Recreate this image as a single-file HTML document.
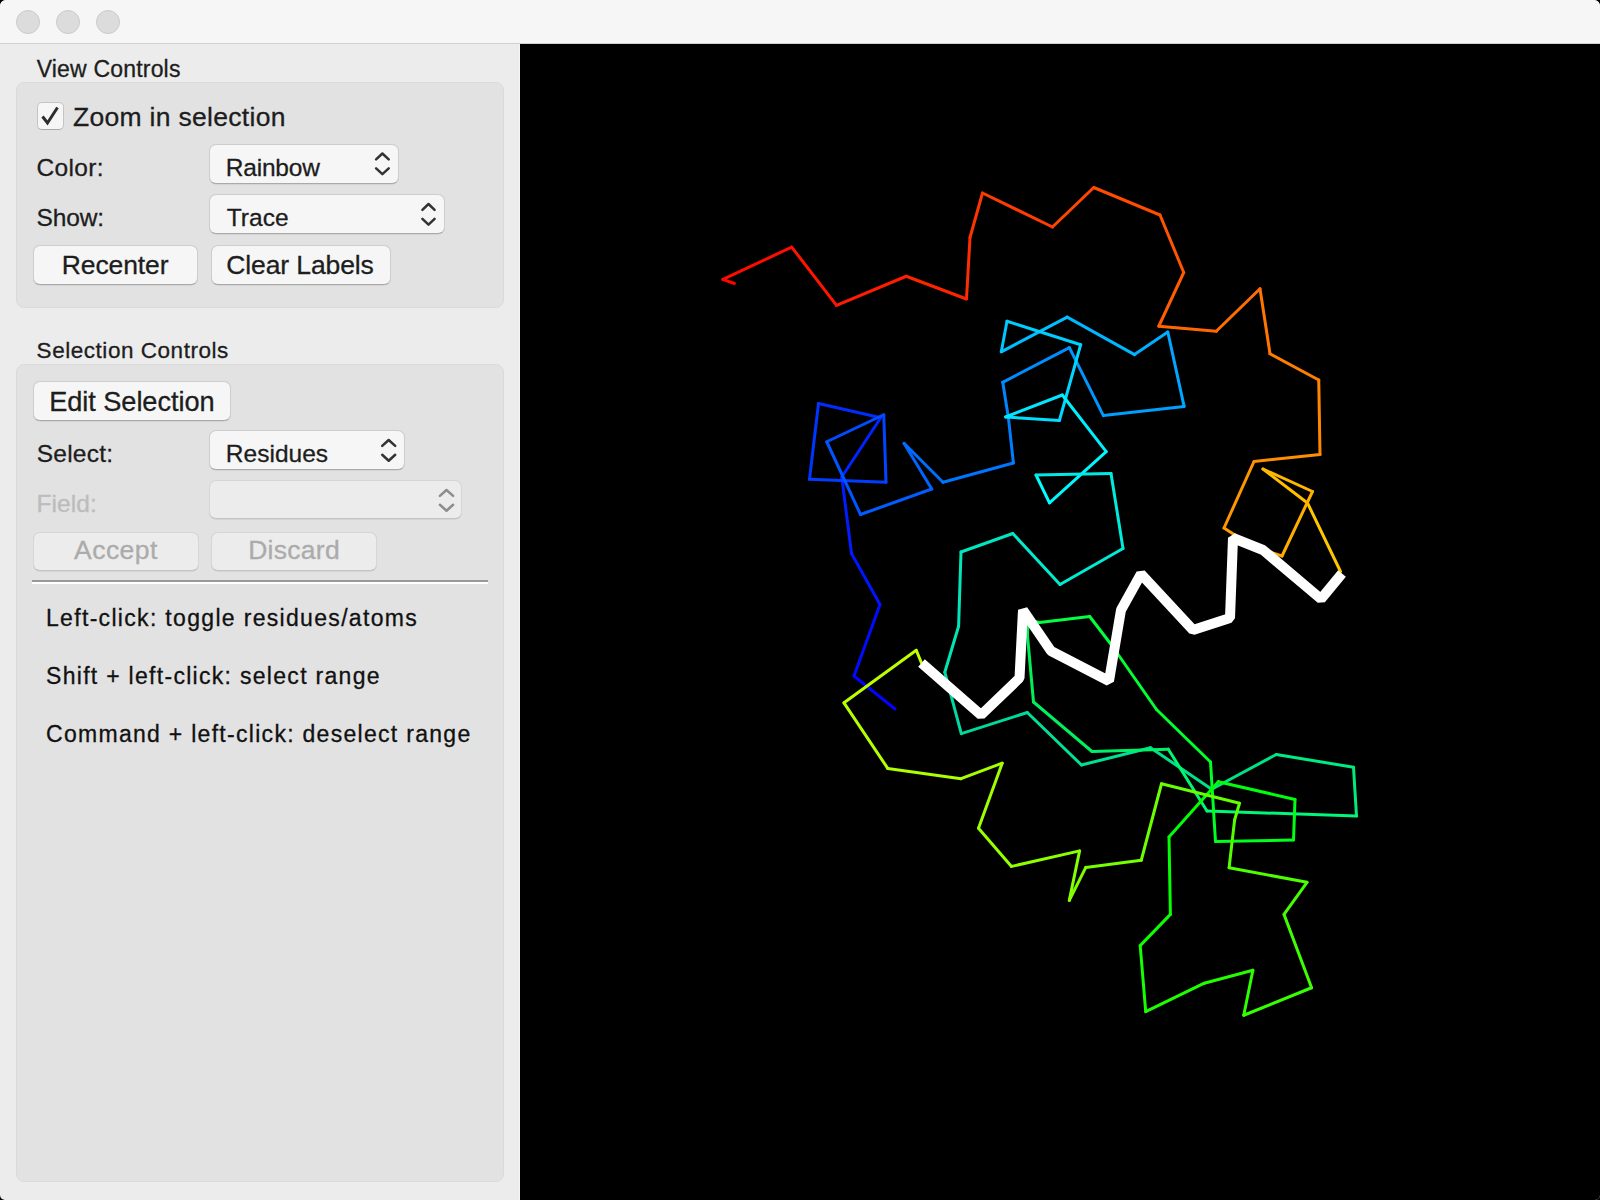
<!DOCTYPE html>
<html><head><meta charset="utf-8"><style>
html,body{margin:0;padding:0;width:1600px;height:1200px;overflow:hidden;background:#000}
.abs{position:absolute}
.tx{position:absolute;white-space:nowrap;font-family:"Liberation Sans",sans-serif;-webkit-text-stroke:0.3px currentColor}
#win{position:absolute;left:0;top:0;width:1600px;height:1200px;border-radius:6px 6px 5px 5px;overflow:hidden;background:#ececec}
#title{position:absolute;left:0;top:0;width:1600px;height:43px;background:#f6f6f6;border-bottom:1px solid #d1d1d1}
.tl{position:absolute;top:10px;width:22px;height:22px;border-radius:50%;background:#dcdcdc;border:1px solid #cbcbcb}
.box{position:absolute;background:#e2e2e2;border:1px solid #dadada;border-radius:8px;box-sizing:border-box}
.popup,.btn{position:absolute;box-sizing:border-box;background:#f6f6f6;border-radius:7px;border:1px solid #cdcdcd;border-bottom-color:#aaaaaa;box-shadow:0 0.5px 0.5px rgba(0,0,0,0.12)}
.dis{background:#ececec;border-color:#d6d6d6;border-bottom-color:#c4c4c4}
#canvas{position:absolute;left:520px;top:44px;width:1080px;height:1156px;background:#000;border-left:1px solid #f4f4f4;margin-left:-1px}
</style></head><body>
<div id="win">
<div id="title"></div>
<div class="tl" style="left:16px"></div>
<div class="tl" style="left:56px"></div>
<div class="tl" style="left:96px"></div>
<div class="box" style="left:16px;top:82px;width:488px;height:226px"></div>
<div class="box" style="left:16px;top:364px;width:488px;height:818px"></div>
<div class="abs" style="left:32px;top:580px;width:456px;height:2px;background:#999"></div>
<div class="abs" style="left:32px;top:582px;width:456px;height:2px;background:#fff"></div>
<div class="abs" style="left:36.5px;top:102px;width:27px;height:27.5px;box-sizing:border-box;border-radius:5px;background:#f6f6f6;border:1px solid #c4c4c4;border-bottom-color:#a9a9a9"></div>
<svg class="abs" style="left:0;top:0" width="1600" height="1200"><polyline points="42.5,116.5 47.5,123 57.5,107.5" fill="none" stroke="#2e2e2e" stroke-width="3" stroke-linecap="butt" stroke-linejoin="miter"/></svg>
<div class="popup" style="left:209.2px;top:144.3px;width:190.0px;height:39.29999999999998px"></div>
<svg class="abs" style="left:0;top:0" width="1600" height="1200"><polyline points="376.09999999999997,159.4 382.4,153.5 388.70000000000005,159.4" fill="none" stroke="#333" stroke-width="2.5" stroke-linecap="round" stroke-linejoin="round"/><polyline points="376.09999999999997,168.3 382.4,174.2 388.70000000000005,168.3" fill="none" stroke="#333" stroke-width="2.5" stroke-linecap="round" stroke-linejoin="round"/></svg>
<div class="popup" style="left:209.2px;top:194.2px;width:236.0px;height:39.400000000000006px"></div>
<svg class="abs" style="left:0;top:0" width="1600" height="1200"><polyline points="422.4,209.9 428.5,204.0 434.6,209.9" fill="none" stroke="#333" stroke-width="2.5" stroke-linecap="round" stroke-linejoin="round"/><polyline points="422.4,218.8 428.5,224.7 434.6,218.8" fill="none" stroke="#333" stroke-width="2.5" stroke-linecap="round" stroke-linejoin="round"/></svg>
<div class="btn" style="left:32.8px;top:245px;width:165.60000000000002px;height:39.60000000000002px"></div>
<div class="btn" style="left:211.2px;top:245px;width:179.8px;height:39.60000000000002px"></div>
<div class="btn" style="left:32.8px;top:381px;width:198.2px;height:39.80000000000001px"></div>
<div class="popup" style="left:209.2px;top:430.4px;width:195.40000000000003px;height:39.400000000000034px"></div>
<svg class="abs" style="left:0;top:0" width="1600" height="1200"><polyline points="382.2,445.9 388.70000000000005,440.0 395.20000000000005,445.9" fill="none" stroke="#333" stroke-width="2.5" stroke-linecap="round" stroke-linejoin="round"/><polyline points="382.2,454.8 388.70000000000005,460.7 395.20000000000005,454.8" fill="none" stroke="#333" stroke-width="2.5" stroke-linecap="round" stroke-linejoin="round"/></svg>
<div class="popup dis" style="left:209.2px;top:480.2px;width:253.2px;height:39.30000000000001px"></div>
<svg class="abs" style="left:0;top:0" width="1600" height="1200"><polyline points="439.9,495.9 446.5,490.0 453.1,495.9" fill="none" stroke="#8d8d8d" stroke-width="2.5" stroke-linecap="round" stroke-linejoin="round"/><polyline points="439.9,504.8 446.5,510.7 453.1,504.8" fill="none" stroke="#8d8d8d" stroke-width="2.5" stroke-linecap="round" stroke-linejoin="round"/></svg>
<div class="btn dis" style="left:33px;top:531.5px;width:165.6px;height:39.10000000000002px"></div>
<div class="btn dis" style="left:211.2px;top:531.5px;width:165.60000000000002px;height:39.10000000000002px"></div>

<div class="tx" style="left:36.70px;top:57.53px;font-size:23px;line-height:23px;letter-spacing:0.188px;color:#1d1d1d;">View Controls</div>
<div class="tx" style="left:72.90px;top:103.97px;font-size:26.5px;line-height:26.5px;letter-spacing:0.307px;color:#1d1d1d;">Zoom in selection</div>
<div class="tx" style="left:36.60px;top:156.06px;font-size:24.5px;line-height:24.5px;letter-spacing:0.309px;color:#1d1d1d;">Color:</div>
<div class="tx" style="left:36.60px;top:206.26px;font-size:24.5px;line-height:24.5px;letter-spacing:-0.128px;color:#1d1d1d;">Show:</div>
<div class="tx" style="left:225.80px;top:156.26px;font-size:24.5px;line-height:24.5px;letter-spacing:-0.205px;color:#1d1d1d;">Rainbow</div>
<div class="tx" style="left:226.80px;top:206.26px;font-size:24.5px;line-height:24.5px;letter-spacing:0.015px;color:#1d1d1d;">Trace</div>
<div class="tx" style="left:61.75px;top:252.47px;font-size:26.5px;line-height:26.5px;letter-spacing:-0.103px;color:#1d1d1d;">Recenter</div>
<div class="tx" style="left:226.20px;top:252.47px;font-size:26.5px;line-height:26.5px;letter-spacing:-0.100px;color:#1d1d1d;">Clear Labels</div>
<div class="tx" style="left:36.60px;top:339.95px;font-size:22.5px;line-height:22.5px;letter-spacing:0.536px;color:#1d1d1d;">Selection Controls</div>
<div class="tx" style="left:49.20px;top:387.58px;font-size:27.2px;line-height:27.2px;letter-spacing:-0.064px;color:#1d1d1d;">Edit Selection</div>
<div class="tx" style="left:36.80px;top:442.06px;font-size:24.5px;line-height:24.5px;letter-spacing:0.215px;color:#1d1d1d;">Select:</div>
<div class="tx" style="left:225.80px;top:442.06px;font-size:24.5px;line-height:24.5px;letter-spacing:0.019px;color:#1d1d1d;">Residues</div>
<div class="tx" style="left:36.40px;top:492.06px;font-size:24.5px;line-height:24.5px;letter-spacing:0.079px;color:#bcbcbc;">Field:</div>
<div class="tx" style="left:74.00px;top:537.37px;font-size:26.5px;line-height:26.5px;letter-spacing:0.475px;color:#ababab;">Accept</div>
<div class="tx" style="left:248.20px;top:537.37px;font-size:26.5px;line-height:26.5px;letter-spacing:0.278px;color:#ababab;">Discard</div>
<div class="tx" style="left:46.00px;top:607.33px;font-size:23px;line-height:23px;letter-spacing:1.320px;color:#111;">Left-click: toggle residues/atoms</div>
<div class="tx" style="left:46.00px;top:665.23px;font-size:23px;line-height:23px;letter-spacing:1.295px;color:#111;">Shift + left-click: select range</div>
<div class="tx" style="left:46.00px;top:722.83px;font-size:23px;line-height:23px;letter-spacing:1.290px;color:#111;">Command + left-click: deselect range</div>

<div id="canvas"></div>
<svg class="abs" style="left:0;top:0" width="1600" height="1200"><g stroke-width="3" stroke-linecap="round"><line x1="895" y1="709" x2="854" y2="676" stroke="#0004ff"/><line x1="854" y1="676" x2="880" y2="604.5" stroke="#000cff"/><line x1="880" y1="604.5" x2="851.5" y2="553.5" stroke="#0014ff"/><line x1="851.5" y1="553.5" x2="841.75" y2="477" stroke="#001cff"/><line x1="841.75" y1="477" x2="880.75" y2="417.75" stroke="#0024ff"/><line x1="880.75" y1="417.75" x2="818.5" y2="403.5" stroke="#002dff"/><line x1="818.5" y1="403.5" x2="809.5" y2="479.25" stroke="#0035ff"/><line x1="809.5" y1="479.25" x2="886" y2="482.25" stroke="#003dff"/><line x1="886" y1="482.25" x2="883.75" y2="414.75" stroke="#0045ff"/><line x1="883.75" y1="414.75" x2="826.75" y2="441.75" stroke="#004dff"/><line x1="826.75" y1="441.75" x2="860.5" y2="514.5" stroke="#0055ff"/><line x1="860.5" y1="514.5" x2="931.75" y2="489" stroke="#005dff"/><line x1="931.75" y1="489" x2="904" y2="443.25" stroke="#0065ff"/><line x1="904" y1="443.25" x2="943" y2="482.25" stroke="#006dff"/><line x1="943" y1="482.25" x2="1013.4" y2="463" stroke="#0075ff"/><line x1="1013.4" y1="463" x2="1008.4" y2="417.7" stroke="#007dff"/><line x1="1008.4" y1="417.7" x2="1002.75" y2="382.3" stroke="#0086ff"/><line x1="1002.75" y1="382.3" x2="1069.4" y2="347.6" stroke="#008eff"/><line x1="1069.4" y1="347.6" x2="1103.4" y2="415.6" stroke="#0096ff"/><line x1="1103.4" y1="415.6" x2="1184.1" y2="406.4" stroke="#009eff"/><line x1="1184.1" y1="406.4" x2="1167.8" y2="332" stroke="#00a6ff"/><line x1="1167.8" y1="332" x2="1134.5" y2="354.6" stroke="#00aeff"/><line x1="1134.5" y1="354.6" x2="1067.2" y2="317.1" stroke="#00b6ff"/><line x1="1067.2" y1="317.1" x2="1001.3" y2="351.8" stroke="#00beff"/><line x1="1001.3" y1="351.8" x2="1007" y2="321.3" stroke="#00c6ff"/><line x1="1007" y1="321.3" x2="1080.7" y2="344.7" stroke="#00ceff"/><line x1="1080.7" y1="344.7" x2="1059.4" y2="420.5" stroke="#00d7ff"/><line x1="1059.4" y1="420.5" x2="1005.6" y2="417" stroke="#00dfff"/><line x1="1005.6" y1="417" x2="1062.3" y2="395" stroke="#00e7ff"/><line x1="1062.3" y1="395" x2="1106.2" y2="451.7" stroke="#00efff"/><line x1="1106.2" y1="451.7" x2="1049.5" y2="502.8" stroke="#00f7ff"/><line x1="1049.5" y1="502.8" x2="1036" y2="475" stroke="#00ffff"/><line x1="1036" y1="475" x2="1111" y2="473.5" stroke="#00ebe3"/><line x1="1111" y1="473.5" x2="1123" y2="548.5" stroke="#00ebdc"/><line x1="1123" y1="548.5" x2="1060" y2="584.5" stroke="#00ebd4"/><line x1="1060" y1="584.5" x2="1012.8" y2="533.5" stroke="#00ebcd"/><line x1="1012.8" y1="533.5" x2="961" y2="552" stroke="#00e6c1"/><line x1="961" y1="552" x2="958.6" y2="626.3" stroke="#00e6ba"/><line x1="958.6" y1="626.3" x2="944.8" y2="672.2" stroke="#00e6b3"/><line x1="944.8" y1="672.2" x2="961.3" y2="733.6" stroke="#00d9a2"/><line x1="961.3" y1="733.6" x2="1027.3" y2="712.5" stroke="#00d99b"/><line x1="1027.3" y1="712.5" x2="1081.5" y2="765" stroke="#00e099"/><line x1="1081.5" y1="765" x2="1150.5" y2="747.7" stroke="#00e092"/><line x1="1150.5" y1="747.7" x2="1211.7" y2="789.2" stroke="#00e08b"/><line x1="1211.7" y1="789.2" x2="1276.25" y2="754.5" stroke="#00e084"/><line x1="1276.25" y1="754.5" x2="1353.5" y2="767.25" stroke="#00eb82"/><line x1="1353.5" y1="767.25" x2="1356.5" y2="816" stroke="#00eb7b"/><line x1="1356.5" y1="816" x2="1207" y2="811" stroke="#00f77a"/><line x1="1207" y1="811" x2="1168.3" y2="749.2" stroke="#00f772"/><line x1="1168.3" y1="749.2" x2="1092" y2="751.5" stroke="#00f067"/><line x1="1092" y1="751.5" x2="1033.5" y2="702" stroke="#00f05f"/><line x1="1033.5" y1="702" x2="1027.5" y2="636" stroke="#00f058"/><line x1="1027.5" y1="636" x2="1028" y2="620" stroke="#00f050"/><line x1="1028" y1="620" x2="1039.5" y2="622.5" stroke="#00ff4d"/><line x1="1039.5" y1="622.5" x2="1089.7" y2="616.5" stroke="#00ff45"/><line x1="1089.7" y1="616.5" x2="1111.5" y2="645" stroke="#00ff3d"/><line x1="1111.5" y1="645" x2="1156.5" y2="709.5" stroke="#00ff35"/><line x1="1156.5" y1="709.5" x2="1210.5" y2="762" stroke="#00ff2d"/><line x1="1210.5" y1="762" x2="1215.5" y2="841.5" stroke="#00ff24"/><line x1="1215.5" y1="841.5" x2="1293.5" y2="840" stroke="#00ff1c"/><line x1="1293.5" y1="840" x2="1295" y2="799.5" stroke="#00ff14"/><line x1="1295" y1="799.5" x2="1218.3" y2="781.7" stroke="#00ff0c"/><line x1="1218.3" y1="781.7" x2="1169" y2="837" stroke="#00ff04"/><line x1="1169" y1="837" x2="1170.4" y2="914.4" stroke="#04ff00"/><line x1="1170.4" y1="914.4" x2="1140.2" y2="945.6" stroke="#0cff00"/><line x1="1140.2" y1="945.6" x2="1145.7" y2="1011.6" stroke="#14ff00"/><line x1="1145.7" y1="1011.6" x2="1204.3" y2="983.2" stroke="#1cff00"/><line x1="1204.3" y1="983.2" x2="1252.9" y2="970.3" stroke="#24ff00"/><line x1="1252.9" y1="970.3" x2="1243.75" y2="1015.25" stroke="#2dff00"/><line x1="1243.75" y1="1015.25" x2="1311.6" y2="987.75" stroke="#35ff00"/><line x1="1311.6" y1="987.75" x2="1284" y2="914.4" stroke="#3dff00"/><line x1="1284" y1="914.4" x2="1307" y2="882.3" stroke="#45ff00"/><line x1="1307" y1="882.3" x2="1229.1" y2="867.7" stroke="#4dff00"/><line x1="1229.1" y1="867.7" x2="1234.6" y2="820" stroke="#55ff00"/><line x1="1234.6" y1="820" x2="1239.5" y2="803.25" stroke="#5dff00"/><line x1="1239.5" y1="803.25" x2="1161.5" y2="783.75" stroke="#65ff00"/><line x1="1161.5" y1="783.75" x2="1141.25" y2="860.25" stroke="#6dff00"/><line x1="1141.25" y1="860.25" x2="1085.8" y2="867.4" stroke="#75ff00"/><line x1="1085.8" y1="867.4" x2="1069.3" y2="900.4" stroke="#7dff00"/><line x1="1069.3" y1="900.4" x2="1079.6" y2="850.9" stroke="#86ff00"/><line x1="1079.6" y1="850.9" x2="1011.5" y2="866.4" stroke="#8eff00"/><line x1="1011.5" y1="866.4" x2="978.5" y2="828.2" stroke="#96ff00"/><line x1="978.5" y1="828.2" x2="1002.2" y2="763.2" stroke="#9eff00"/><line x1="1002.2" y1="763.2" x2="961" y2="778.7" stroke="#a6ff00"/><line x1="961" y1="778.7" x2="887.75" y2="768.4" stroke="#aeff00"/><line x1="887.75" y1="768.4" x2="844" y2="702.8" stroke="#b6ff00"/><line x1="844" y1="702.8" x2="916.25" y2="650.3" stroke="#beff00"/><line x1="916.25" y1="650.3" x2="921.5" y2="663" stroke="#c6ff00"/><line x1="1340.5" y1="571.5" x2="1307.5" y2="503" stroke="#ffc600"/><line x1="1307.5" y1="503" x2="1263" y2="469" stroke="#ffbe00"/><line x1="1263" y1="469" x2="1312.5" y2="491.5" stroke="#ffb600"/><line x1="1312.5" y1="491.5" x2="1282" y2="556" stroke="#ffae00"/><line x1="1282" y1="556" x2="1252" y2="546" stroke="#ffa600"/><line x1="1252" y1="546" x2="1224" y2="528" stroke="#ff9e00"/><line x1="1224" y1="528" x2="1254" y2="461.5" stroke="#ff9600"/><line x1="1254" y1="461.5" x2="1320" y2="454.5" stroke="#ff8e00"/><line x1="1320" y1="454.5" x2="1318.75" y2="380" stroke="#ff8600"/><line x1="1318.75" y1="380" x2="1270" y2="353.75" stroke="#ff7d00"/><line x1="1270" y1="353.75" x2="1260" y2="288.75" stroke="#ff7500"/><line x1="1260" y1="288.75" x2="1216.25" y2="331.25" stroke="#ff6d00"/><line x1="1216.25" y1="331.25" x2="1158.75" y2="326.25" stroke="#ff6500"/><line x1="1158.75" y1="326.25" x2="1183.75" y2="272.5" stroke="#ff5d00"/><line x1="1183.75" y1="272.5" x2="1160" y2="215" stroke="#ff5500"/><line x1="1160" y1="215" x2="1093.75" y2="187.5" stroke="#ff4d00"/><line x1="1093.75" y1="187.5" x2="1052.5" y2="227" stroke="#ff4500"/><line x1="1052.5" y1="227" x2="982.5" y2="193" stroke="#ff3d00"/><line x1="982.5" y1="193" x2="970" y2="237.5" stroke="#ff3500"/><line x1="970" y1="237.5" x2="966.5" y2="299" stroke="#ff2d00"/><line x1="966.5" y1="299" x2="906.25" y2="276.25" stroke="#ff2400"/><line x1="906.25" y1="276.25" x2="836.5" y2="305.4" stroke="#ff1c00"/><line x1="836.5" y1="305.4" x2="791.7" y2="247.1" stroke="#ff1400"/><line x1="791.7" y1="247.1" x2="722.9" y2="279.4" stroke="#ff0c00"/><line x1="722.9" y1="279.4" x2="734.4" y2="283.5" stroke="#ff0400"/></g><polyline points="921.5,663 981,715 1019.5,678 1023,610 1051,651 1109,681 1121,610 1141,574 1193,630 1230,618 1233,538 1263,550 1321,599 1342,573.5" fill="none" stroke="#fff" stroke-width="10" stroke-linejoin="bevel" stroke-linecap="butt"/></svg>
</div>
</body></html>
